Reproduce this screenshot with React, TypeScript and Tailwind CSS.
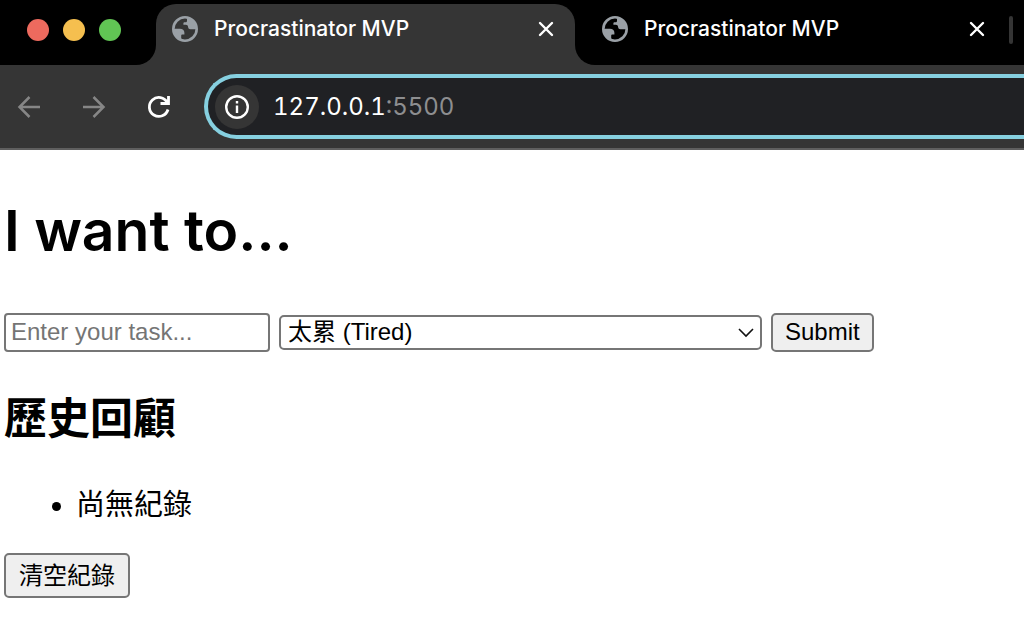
import React from "react";

function Globe() {
  return (
    <svg viewBox="0 0 26 26" className="h-[26px] w-[26px] shrink-0" aria-hidden="true">
      <circle cx="13" cy="13" r="11.7" fill="none" stroke="#9aa0a6" strokeWidth="2.6" />
      <path
        fill="#9aa0a6"
        d="M15 1.500v3.200c0 1-.6 1.600-1.600 1.600h-.6c-.9 0-1.400.5-1.400 1.300v1.200h2.400c1.400 0 2.100.8 2.300 2.200.2 1.500.9 2.200 2.300 2.200H24.500C24.500 7 20.500 2 15 1.500z"
      />
      <path
        fill="#9aa0a6"
        d="M1.500 12.800h6.300c2.800 0 4.600 1.600 4.600 4v1.700h-1.900c-.8 0-1.300.5-1.300 1.300V22.500l3.500 2C6.500 24.500 1.500 19.500 1.500 12.800z"
      />
    </svg>
  );
}

function CloseButton() {
  return (
    <button type="button" aria-label="Close tab" className="flex h-[26px] w-6 shrink-0 items-center justify-center text-white">
      <svg viewBox="0 0 16 16" className="h-4 w-4" fill="none" stroke="currentColor" strokeWidth="2.4" strokeLinecap="round" aria-hidden="true">
        <path d="M2 2l12 12M14 2L2 14" />
      </svg>
    </button>
  );
}

function TabBody({ title }: { title: string }) {
  return (
    <>
      <Globe />
      <span className="ml-4 flex-1 truncate text-[21px] leading-[26px] font-medium text-white">{title}</span>
      <CloseButton />
    </>
  );
}

function BrowserChrome() {
  return (
    <header className="bg-[#353535] font-['Inter',sans-serif]">
      <div className="flex h-[65px]">
        <div className="flex w-[156px] shrink-0 gap-[14px] rounded-br-[20px] bg-black pt-[19px] pl-[27px]">
          <span className="h-[22px] w-[22px] rounded-full bg-[#ed6a5e]" />
          <span className="h-[22px] w-[22px] rounded-full bg-[#f5bf4f]" />
          <span className="h-[22px] w-[22px] rounded-full bg-[#61c554]" />
        </div>
        <div className="w-[419px] shrink-0 bg-linear-to-b from-black from-50% to-[#353535] to-50% pt-1">
          <div className="flex h-full items-start rounded-t-[20px] bg-[#353535] pt-3 pr-[17px] pl-4">
            <TabBody title="Procrastinator MVP" />
          </div>
        </div>
        <div className="flex min-w-0 flex-1 items-start rounded-bl-[20px] bg-black pt-4 pr-[11px] pl-[27px]">
          <TabBody title="Procrastinator MVP" />
          <span className="ml-5 h-7 w-1 shrink-0 rounded-full bg-[#353535]" />
        </div>
      </div>
      <div className="flex items-center border-b-2 border-[#5f5f5f] pt-[9px] pb-[9px] pl-[17px]">
        <nav className="flex shrink-0 gap-[41px]">
          <button type="button" aria-label="Back" className="text-[#868686]">
            <svg viewBox="0 0 24 24" className="h-6 w-6" fill="none" stroke="currentColor" strokeWidth="2.5" aria-hidden="true">
              <path d="M23 12H3M12.500 2L2.500 12l10 10" />
            </svg>
          </button>
          <button type="button" aria-label="Forward" className="text-[#868686]">
            <svg viewBox="0 0 24 24" className="h-6 w-6" fill="none" stroke="currentColor" strokeWidth="2.5" aria-hidden="true">
              <path d="M1 12h20M11.500 2l10 10-10 10" />
            </svg>
          </button>
          <button type="button" aria-label="Reload" className="text-white">
            <svg viewBox="0 0 24 24" className="h-6 w-6" fill="none" stroke="currentColor" strokeWidth="2.8" aria-hidden="true">
              <path d="M20.300 7.500A9.500 9.500 0 1 0 21 14.500M21.500 1V8.500H13.500" />
            </svg>
          </button>
        </nav>
        <div className="ml-[33px] flex h-[65px] min-w-0 flex-1 items-center rounded-l-full border-4 border-r-0 border-[#86d0e0] bg-[#202124] pl-[7px]">
          <button type="button" aria-label="Site information" className="flex h-11 w-11 shrink-0 items-center justify-center rounded-full bg-[#353535] text-white">
            <svg viewBox="0 0 24 24" className="h-6 w-6" fill="none" stroke="currentColor" strokeWidth="2.4" aria-hidden="true">
              <circle cx="12" cy="12" r="10.8" />
              <path d="M12 10.500V18M12 6v2.500" />
            </svg>
          </button>
          <a href="#" className="ml-[14px] text-2xl text-white tabular-nums">
            127.0.0.1<span className="text-[#8d8e90]">:5500</span>
          </a>
        </div>
      </div>
    </header>
  );
}

export default function App() {
  return (
    <div className="min-h-screen bg-white text-black">
      <BrowserChrome />
      <main className="px-1 pt-[47px] pb-8 font-['Liberation_Sans','Noto_Sans_CJK_TC',sans-serif]">
        <h1 className="font-['Inter',sans-serif] text-[57px] leading-[68px] font-semibold">I want to...</h1>
        <form className="mt-12 flex items-center text-2xl" onSubmit={(e) => e.preventDefault()}>
          <input
            type="text"
            aria-label="Task"
            placeholder="Enter your task..."
            className="h-[39px] w-[266px] rounded-[4px] border-2 border-[#767676] px-[5px] pb-[2px] placeholder:text-[#757575]"
          />
          <div className="ml-[9px] grid w-[483px] items-center">
            <select
              aria-label="Reason"
              className="col-start-1 row-start-1 h-[35px] appearance-none rounded-[5px] border-2 border-[#767676] bg-white pb-[2px] pl-[7px] leading-[29px]"
            >
              <option>太累 (Tired)</option>
            </select>
            <svg viewBox="0 0 16 10" className="pointer-events-none col-start-1 row-start-1 mr-2 h-[10px] w-4 justify-self-end" fill="none" stroke="#111" strokeWidth="1.6" aria-hidden="true">
              <path d="M1 1l7 7 7-7" />
            </svg>
          </div>
          <button type="submit" className="ml-[9px] h-[39px] rounded-[5px] border-2 border-[#767676] bg-[#efefef] px-3 pb-[2px]">
            Submit
          </button>
        </form>
        <h2 className="mt-9 text-[43px] leading-[62px] font-bold">歷史回顧</h2>
        <ul className="mt-[35px] list-disc pl-[72px] text-[29px] leading-10">
          <li>尚無紀錄</li>
        </ul>
        <button type="button" className="mt-7 h-[45px] rounded-[5px] border-2 border-[#767676] bg-[#efefef] px-[13px] text-2xl">
          清空紀錄
        </button>
      </main>
    </div>
  );
}
